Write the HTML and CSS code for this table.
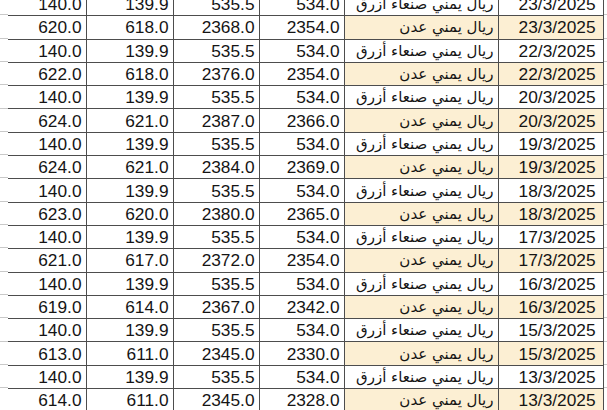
FILE: index.html
```html
<!DOCTYPE html>
<html lang="ar">
<head>
<meta charset="utf-8">
<title>أسعار الصرف</title>
<link rel="stylesheet" href="styles.css">
</head>
<body>
<div class="sheet">
<table class="rates">
<colgroup>
<col class="c1"><col class="c2"><col class="c3"><col class="c4"><col class="c5"><col class="c6">
</colgroup>
<tbody>
<tr><td>140.0</td><td>139.9</td><td>535.5</td><td>534.0</td><td class="name" dir="rtl">ريال يمني صنعاء أزرق</td><td class="date">23/3/2025</td></tr>
<tr class="aden"><td>620.0</td><td>618.0</td><td>2368.0</td><td>2354.0</td><td class="name" dir="rtl">ريال يمني عدن</td><td class="date">23/3/2025</td></tr>
<tr><td>140.0</td><td>139.9</td><td>535.5</td><td>534.0</td><td class="name" dir="rtl">ريال يمني صنعاء أزرق</td><td class="date">22/3/2025</td></tr>
<tr class="aden"><td>622.0</td><td>618.0</td><td>2376.0</td><td>2354.0</td><td class="name" dir="rtl">ريال يمني عدن</td><td class="date">22/3/2025</td></tr>
<tr><td>140.0</td><td>139.9</td><td>535.5</td><td>534.0</td><td class="name" dir="rtl">ريال يمني صنعاء أزرق</td><td class="date">20/3/2025</td></tr>
<tr class="aden"><td>624.0</td><td>621.0</td><td>2387.0</td><td>2366.0</td><td class="name" dir="rtl">ريال يمني عدن</td><td class="date">20/3/2025</td></tr>
<tr><td>140.0</td><td>139.9</td><td>535.5</td><td>534.0</td><td class="name" dir="rtl">ريال يمني صنعاء أزرق</td><td class="date">19/3/2025</td></tr>
<tr class="aden"><td>624.0</td><td>621.0</td><td>2384.0</td><td>2369.0</td><td class="name" dir="rtl">ريال يمني عدن</td><td class="date">19/3/2025</td></tr>
<tr><td>140.0</td><td>139.9</td><td>535.5</td><td>534.0</td><td class="name" dir="rtl">ريال يمني صنعاء أزرق</td><td class="date">18/3/2025</td></tr>
<tr class="aden"><td>623.0</td><td>620.0</td><td>2380.0</td><td>2365.0</td><td class="name" dir="rtl">ريال يمني عدن</td><td class="date">18/3/2025</td></tr>
<tr><td>140.0</td><td>139.9</td><td>535.5</td><td>534.0</td><td class="name" dir="rtl">ريال يمني صنعاء أزرق</td><td class="date">17/3/2025</td></tr>
<tr class="aden"><td>621.0</td><td>617.0</td><td>2372.0</td><td>2354.0</td><td class="name" dir="rtl">ريال يمني عدن</td><td class="date">17/3/2025</td></tr>
<tr><td>140.0</td><td>139.9</td><td>535.5</td><td>534.0</td><td class="name" dir="rtl">ريال يمني صنعاء أزرق</td><td class="date">16/3/2025</td></tr>
<tr class="aden"><td>619.0</td><td>614.0</td><td>2367.0</td><td>2342.0</td><td class="name" dir="rtl">ريال يمني عدن</td><td class="date">16/3/2025</td></tr>
<tr><td>140.0</td><td>139.9</td><td>535.5</td><td>534.0</td><td class="name" dir="rtl">ريال يمني صنعاء أزرق</td><td class="date">15/3/2025</td></tr>
<tr class="aden"><td>613.0</td><td>611.0</td><td>2345.0</td><td>2330.0</td><td class="name" dir="rtl">ريال يمني عدن</td><td class="date">15/3/2025</td></tr>
<tr><td>140.0</td><td>139.9</td><td>535.5</td><td>534.0</td><td class="name" dir="rtl">ريال يمني صنعاء أزرق</td><td class="date">13/3/2025</td></tr>
<tr class="aden"><td>614.0</td><td>611.0</td><td>2345.0</td><td>2328.0</td><td class="name" dir="rtl">ريال يمني عدن</td><td class="date">13/3/2025</td></tr>
</tbody>
</table>
</div>
</body>
</html>
```

FILE: styles.css
```css
html, body {
  margin: 0;
  padding: 0;
  background: #ffffff;
}
body {
  width: 607px;
  height: 410px;
  overflow: hidden;
}
.sheet {
  width: 607px;
  height: 410px;
  overflow: hidden;
  background-image: repeating-linear-gradient(to bottom, transparent 0, transparent 22.3px, #c9c9c9 22.3px, #c9c9c9 23.3px);
  background-position: 0 -8px;
}
.rates {
  border-collapse: collapse;
  table-layout: fixed;
  width: 595px;
  margin: -8px 0 0 8px;
  font-family: "Liberation Sans", Arial, sans-serif;
  font-size: 17.3px;
  color: #151515;
}
.c1 { width: 78px; }
.c2 { width: 87px; }
.c3 { width: 86px; }
.c4 { width: 85px; }
.c5 { width: 154px; }
.c6 { width: 105px; }
.rates tr { height: 23.3px; }
.rates td {
  border: 1px solid #4d4d4d;
  padding: 0 4px 0 0;
  text-align: right;
  line-height: 20px;
  white-space: nowrap;
  overflow: hidden;
  background: #ffffff;
}
.rates td:first-child {
  border-left: none;
}
.rates td.name {
  font-family: "DejaVu Sans", "Noto Sans", sans-serif;
  font-size: 15px;
  text-align: right;
  padding: 0 4px 0 0;
}
.rates td.date {
  padding-right: 7px;
}
.rates tr.aden td.name,
.rates tr.aden td.date {
  background: #fcefd3;
}
```
